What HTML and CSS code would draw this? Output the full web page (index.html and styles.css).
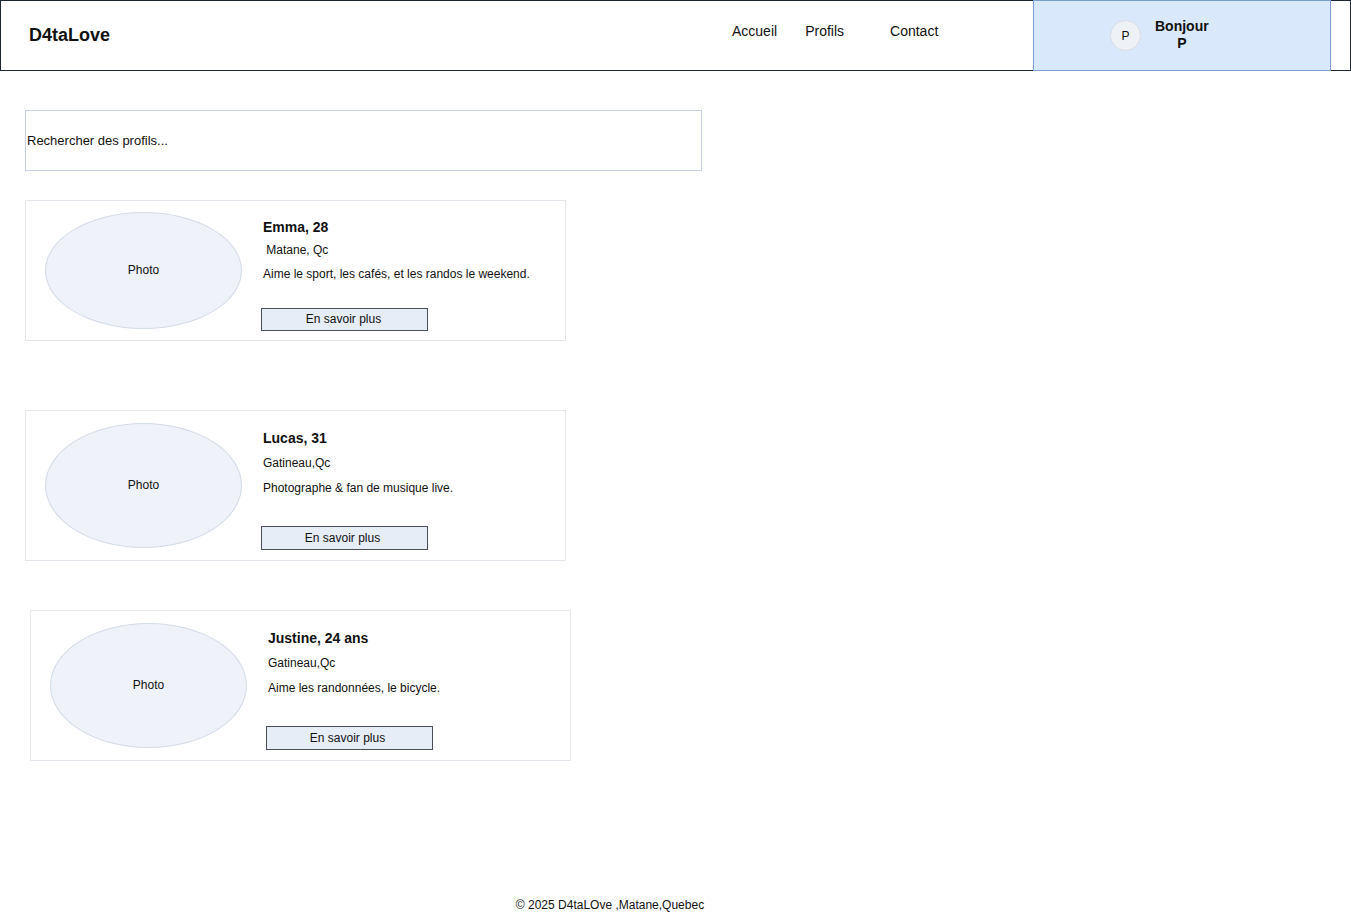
FILE: index.html
```html
<!DOCTYPE html>
<html lang="fr">
<head>
  <meta charset="UTF-8" />
  <meta name="viewport" content="width=device-width, initial-scale=1.0" />
  <title>D4taLove - Profils</title>
  <link rel="stylesheet" href="styles.css">
</head>
<body>
  <div class="header">
    <div class="logo">D4taLove</div>
    <div class="nav">
      <a href="#" class="nav-accueil">Accueil</a>
      <a href="#" class="nav-profils">Profils</a>
      <a href="#" class="nav-contact">Contact</a>
    </div>
    <div class="user">
      <div class="avatar">P</div>
      <div class="hello">Bonjour<br>P</div>
    </div>
  </div>

  <div class="main">
    <div class="search">Rechercher des profils...</div>

    <div class="card card-1">
      <div class="photo">Photo</div>
      <div class="info">
        <div class="name">Emma, 28</div>
        <div class="city">&nbsp;Matane, Qc</div>
        <div class="desc">Aime le sport, les cafés, et les randos le weekend.</div>
        <button class="more">En savoir plus</button>
      </div>
    </div>

    <div class="card card-2">
      <div class="photo">Photo</div>
      <div class="info">
        <div class="name">Lucas, 31</div>
        <div class="city">Gatineau,Qc</div>
        <div class="desc">Photographe &amp; fan de musique live.</div>
        <button class="more">En savoir plus</button>
      </div>
    </div>

    <div class="card card-3">
      <div class="photo">Photo</div>
      <div class="info">
        <div class="name">Justine, 24 ans</div>
        <div class="city">Gatineau,Qc</div>
        <div class="desc">Aime les randonnées, le bicycle.</div>
        <button class="more">En savoir plus</button>
      </div>
    </div>
  </div>

  <div class="footer">© 2025 D4taLOve ,Matane,Quebec</div>
</body>
</html>
```

FILE: styles.css
```css
body {
  margin: 0;
  font-family: "Liberation Sans", Arial, sans-serif;
  color: #111;
  background: #fff;
  width: 1351px;
}
.header {
  box-sizing: border-box;
  height: 71px;
  border: 1px solid #1f2633;
  display: flex;
  align-items: stretch;
}
.logo {
  font-size: 18px;
  font-weight: bold;
  padding: 24px 0 0 28px;
  width: 703px;
  box-sizing: border-box;
}
.nav {
  display: flex;
  align-items: flex-start;
  padding-top: 22px;
  width: 329px;
  box-sizing: border-box;
  padding-left: 28px;
}
.nav a {
  color: #111;
  text-decoration: none;
  font-size: 14px;
  line-height: 16px;
}
.nav-profils {
  margin-left: 28px;
}
.nav-contact {
  margin-left: 46px;
}
.user {
  box-sizing: border-box;
  width: 298px;
  margin-top: -1px;
  margin-bottom: -1px;
  background: #dae8fc;
  border: 1px solid #7b9fd0;
  display: flex;
  align-items: center;
  padding-left: 76px;
}
.avatar {
  width: 29px;
  height: 29px;
  border-radius: 50%;
  background: #eef2f7;
  border: 1px solid #d9dde3;
  font-size: 12px;
  display: flex;
  align-items: center;
  justify-content: center;
}
.hello {
  font-size: 14px;
  font-weight: bold;
  line-height: 17px;
  text-align: center;
  margin-left: 14px;
  margin-top: -1px;
}
.main {
  padding: 39px 0 0 25px;
}
.search {
  box-sizing: border-box;
  width: 677px;
  height: 61px;
  border: 1px solid #c6d2e1;
  font-size: 13px;
  display: flex;
  align-items: center;
  padding-left: 1px;
}
.card {
  box-sizing: border-box;
  width: 541px;
  border: 1px solid #e3e6ea;
  display: flex;
  align-items: flex-start;
  padding-left: 19px;
}
.card-1 {
  margin-top: 29px;
  height: 141px;
  padding-top: 11px;
}
.card-2 {
  margin-top: 69px;
  height: 151px;
  padding-top: 12px;
}
.card-3 {
  margin-top: 49px;
  margin-left: 5px;
  height: 151px;
  padding-top: 12px;
}
.photo {
  box-sizing: border-box;
  width: 197px;
  height: 125px;
  border-radius: 50%;
  background: #eff2f8;
  border: 1px solid #d3dbe7;
  font-size: 12px;
  display: flex;
  align-items: center;
  justify-content: center;
  padding-bottom: 2px;
  flex-shrink: 0;
}
.card-1 .photo {
  height: 117px;
}
.info {
  margin-left: 21px;
  display: flex;
  flex-direction: column;
  align-items: flex-start;
  font-size: 12px;
}
.name {
  font-size: 14px;
  font-weight: bold;
  line-height: 18px;
  margin-top: 6px;
}
.city, .desc {
  line-height: 16px;
}
.card-1 .city {
  margin-top: 6px;
}
.card-1 .desc {
  margin-top: 8px;
}
.card-1 .more {
  margin-top: 26px;
  height: 23px;
  padding-bottom: 1px;
}
.card-2 .city, .card-3 .city {
  margin-top: 8px;
}
.card-2 .desc, .card-3 .desc {
  margin-top: 9px;
}
.card-2 .more, .card-3 .more {
  margin-top: 30px;
  padding-right: 4px;
}
.more {
  box-sizing: border-box;
  width: 167px;
  height: 24px;
  margin-left: -2px;
  background: #e6edf7;
  border: 1px solid #4a4f57;
  border-radius: 0;
  font-family: "Liberation Sans", Arial, sans-serif;
  font-size: 12px;
  color: #111;
  padding: 0 2px 0 0;
  cursor: pointer;
}
.footer {
  width: 1220px;
  text-align: center;
  font-size: 12px;
  margin-top: 137px;
}
```
